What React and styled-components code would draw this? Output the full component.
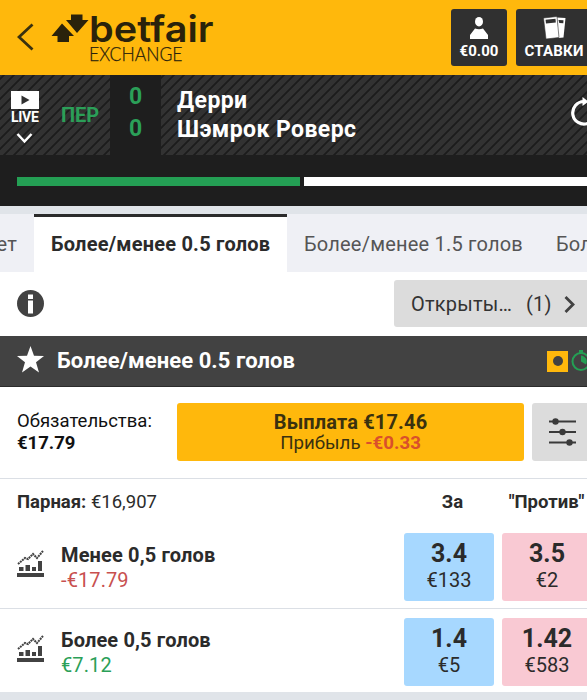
import styled, { createGlobalStyle } from "styled-components";

const GlobalStyle = createGlobalStyle`
  * {
    box-sizing: border-box;
  }
  body {
    margin: 0;
    overflow: hidden;
    background-color: #e0e4e9;
    color: #2b2b2b;
    font-family: Roboto, "Noto Sans", sans-serif;
  }
  svg {
    display: block;
    flex-shrink: 0;
  }
`;

const Page = styled.div`
  width: 100%;
  height: 700px;
  overflow: hidden;
  white-space: nowrap;
`;

const TopBar = styled.header`
  display: flex;
  height: 75px;
  padding: 9px 0 0 17px;
  background-color: #ffb80c;
`;

const BackIcon = styled.svg`
  margin: 14px 17px 0 0;
`;

const TopButtons = styled.div`
  display: flex;
  gap: 9px;
  margin-left: 230px;
`;

const TopButton = styled.button`
  display: flex;
  flex-direction: column;
  flex-shrink: 0;
  align-items: center;
  width: ${(props) => props.$width}px;
  height: 57px;
  padding: 7px 0 0;
  border: 0;
  border-radius: 3px;
  background-color: #303030;
  color: #fff;
  font: 700 15px/18px Roboto, sans-serif;
  letter-spacing: ${(props) => props.$spacing || 0}px;
  svg {
    margin-bottom: 2px;
  }
`;

const Scoreboard = styled.section`
  display: flex;
  height: 80px;
  background: repeating-linear-gradient(
    135deg,
    #323232 0,
    #323232 1.6px,
    #1c1c1c 2.3px,
    #1c1c1c 3.4px,
    #323232 4.1px,
    #323232 7.071px
  );
`;

const Live = styled.div`
  display: flex;
  flex-direction: column;
  flex-shrink: 0;
  width: 61px;
  padding: 16px 0 0 11px;
  color: #fff;
  font-size: 14px;
  line-height: 15px;
  font-weight: 700;
  letter-spacing: -0.3px;
`;

const Period = styled.div`
  flex-shrink: 0;
  width: 49px;
  padding-top: 28px;
  color: #2b9f58;
  font-size: 20px;
  line-height: 24px;
  font-weight: 700;
  letter-spacing: -0.1px;
`;

const Score = styled.div`
  flex-shrink: 0;
  width: 51px;
  padding-top: 6px;
  background-color: #1e1e1e;
  color: #2b9f58;
  font-size: 23px;
  line-height: 32px;
  font-weight: 700;
  text-align: center;
`;

const Teams = styled.div`
  flex: 1;
  padding: 11px 0 0 16px;
  color: #fff;
  font-size: 23px;
  line-height: 29px;
  font-weight: 700;
  letter-spacing: 0.42px;
`;

const RefreshIcon = styled.svg`
  margin: 22px -13px 0 0;
`;

const Timeline = styled.div`
  display: flex;
  gap: 4px;
  height: 51px;
  padding: 22px 0 20px 17px;
  background-color: #1e1e1e;
`;

const Half = styled.div`
  width: 283px;
  flex-shrink: 0;
  background-color: ${(props) => (props.$played ? "#249f54" : "#fff")};
`;

const Tabs = styled.nav`
  display: flex;
  height: 66px;
  padding-top: 8px;
  overflow: hidden;
  background-color: #e0e4e9;
`;

const Tab = styled.a`
  display: flex;
  justify-content: ${(props) => props.$align || "flex-start"};
  flex-shrink: 0;
  width: ${(props) => props.$width}px;
  height: 58px;
  padding: ${(props) => (props.$active ? 15 : 18)}px 17px 0;
  border-top: ${(props) => (props.$active ? "3px solid #2b2b2b" : "0")};
  background-color: ${(props) => (props.$active ? "#fff" : "#eff0f5")};
  color: ${(props) => (props.$active ? "#2b2b2b" : "#555")};
  font-size: 20px;
  line-height: 24px;
  font-weight: ${(props) => (props.$active ? 700 : 400)};
  letter-spacing: 0.21px;
`;

const InfoRow = styled.div`
  display: flex;
  justify-content: space-between;
  height: 64px;
  padding: 8px 0 0 17px;
  background-color: #fff;
`;

const InfoIcon = styled.svg`
  margin-top: 10px;
`;

const OpenBets = styled.button`
  display: flex;
  align-items: center;
  width: 193px;
  height: 47px;
  padding: 0 0 0 17px;
  border: 0;
  border-radius: 3px 0 0 3px;
  background-color: #dcdcdc;
  color: #333;
  font: 400 20px/24px Roboto, sans-serif;
  letter-spacing: 0.2px;
`;

const Count = styled.span`
  margin: 0 12px 0 14px;
`;

const MarketHeader = styled.div`
  display: flex;
  align-items: center;
  height: 51px;
  padding-left: 17px;
  border-bottom: 1px solid #2b2b2b;
  background-color: #424242;
`;

const MarketName = styled.h2`
  flex: 1;
  margin: 0 0 0 13px;
  color: #fff;
  font-size: 22px;
  line-height: 26px;
  font-weight: 700;
  letter-spacing: 0.08px;
`;

const CashOutBadge = styled.span`
  display: flex;
  align-items: center;
  justify-content: center;
  flex-shrink: 0;
  width: 21px;
  height: 21px;
  margin-right: 3px;
  background-color: #ffb80c;
  &::after {
    content: "";
    width: 10px;
    height: 10px;
    border-radius: 50%;
    background-color: #424242;
  }
`;

const TimerIcon = styled.svg`
  margin-right: -4px;
`;

const CashOut = styled.section`
  display: flex;
  height: 92px;
  padding: 16px 0 0 17px;
  border-bottom: 1px solid #dbdfe5;
  background-color: #fff;
`;

const Liability = styled.div`
  flex-shrink: 0;
  width: 160px;
  padding-top: 7px;
  color: #111;
  font-size: 18.5px;
  line-height: 22px;
`;

const CashOutButton = styled.button`
  flex-shrink: 0;
  width: 347px;
  height: 58px;
  margin-right: 8px;
  padding: 2px 0 0;
  border: 0;
  border-radius: 3px;
  background-color: #ffb80c;
  color: #3a310f;
  font: 400 18.7px/21px Roboto, sans-serif;
  strong {
    display: block;
    font-size: 20px;
    letter-spacing: 0.15px;
  }
`;

const Loss = styled.span`
  color: #d9502b;
  font-weight: 700;
`;

const SettingsButton = styled.button`
  flex-shrink: 0;
  width: 75px;
  height: 58px;
  padding: 0 0 0 17px;
  border: 0;
  border-radius: 3px 0 0 3px;
  background-color: #dcdcdc;
`;

const Columns = styled.div`
  display: flex;
  height: 45px;
  padding: 11px 0 0 17px;
  background-color: #fff;
  font-size: 18.5px;
  line-height: 24px;
`;

const Matched = styled.div`
  flex-shrink: 0;
  width: 387px;
`;

const ColumnTitle = styled.strong`
  flex-shrink: 0;
  width: ${(props) => props.$width}px;
  text-align: center;
`;

const RunnerRow = styled.div`
  display: flex;
  height: ${(props) => (props.$last ? 83 : 85)}px;
  padding: 9px 0 0 17px;
  border-bottom: ${(props) => (props.$last ? "0" : "1px solid #dbdfe5")};
  background-color: #fff;
`;

const ChartIcon = styled.svg`
  margin: 17px 17px 0 0;
`;

const Runner = styled.div`
  flex-shrink: 0;
  width: 343px;
  padding-top: 10px;
`;

const RunnerName = styled.div`
  font-size: 20px;
  line-height: 25px;
  font-weight: 700;
  letter-spacing: 0.14px;
`;

const Outcome = styled.div`
  color: ${(props) => (props.$negative ? "#c8504f" : "#2b9f58")};
  font-size: 20px;
  line-height: 25px;
  letter-spacing: 0.1px;
`;

const PriceButton = styled.button`
  flex-shrink: 0;
  width: 90px;
  height: 68px;
  margin-right: 8px;
  padding: 0;
  border: 0;
  border-radius: 3px;
  background-color: ${(props) => (props.$lay ? "#f9c9d3" : "#a7d8ff")};
  color: #2b2b2b;
  font: 400 20px/27px Roboto, sans-serif;
  strong {
    display: block;
    font-size: 25px;
    line-height: 27px;
  }
`;

const runners = [
  { name: "Менее 0,5 голов", outcome: "-€17.79", back: ["3.4", "€133"], lay: ["3.5", "€2"] },
  { name: "Более 0,5 голов", outcome: "€7.12", back: ["1.4", "€5"], lay: ["1.42", "€583"] },
];

function Logo() {
  return (
    <svg width="170" height="60" viewBox="0 0 170 60" fill="#2a220b">
      <path d="M20 5.500h11.500v5.500h6l-11.500 13-11-13h5z" />
      <path d="M11 14.500l12 12.500h-5v6h-11.500v-6h-6z" />
      <text x="38" y="32.500" fontFamily="Inter, sans-serif" fontSize="36" fontWeight="600" textLength="124.500" lengthAdjust="spacingAndGlyphs">
        betfair
      </text>
      <text x="38" y="51.500" fontFamily="Lato, sans-serif" fontSize="18.800" fontWeight="300" stroke="#2a220b" strokeWidth=".25" textLength="93.500" lengthAdjust="spacingAndGlyphs">
        EXCHANGE
      </text>
    </svg>
  );
}

function Chart() {
  return (
    <ChartIcon width="27" height="28" viewBox="0 0 27 28" fill="#424242">
      <path d="M1 14l7-6 3 1 5-5 4 4 6-7" fill="none" stroke="#424242" strokeWidth="2" strokeDasharray="2 .7" />
      <path d="M2 17h4.500v4h-4.500zM8.500 15h4.500v6h-4.500zM15 17h4v4h-4zM21 11h4v10h-4zM0 23h27v4h-27z" />
    </ChartIcon>
  );
}

function Price({ value, lay }) {
  return (
    <PriceButton $lay={lay}>
      <strong>{value[0]}</strong>
      {value[1]}
    </PriceButton>
  );
}

export default function App() {
  return (
    <>
      <GlobalStyle />
      <Page>
        <TopBar>
          <BackIcon width="17" height="29" viewBox="0 0 17 29" fill="none" stroke="#3a310f" strokeWidth="2.800">
            <path d="M15.500 1.500L2 14l13.500 12.500" />
          </BackIcon>
          <Logo />
          <TopButtons>
            <TopButton $width={56}>
              <svg width="18" height="24" viewBox="0 0 18 24" fill="#fff">
                <ellipse cx="9" cy="5.700" rx="4" ry="4.800" />
                <path d="M0 23v-4l5-6.500q4 1.500 8 0l5 6.500v4z" />
              </svg>
              €0.00
            </TopButton>
            <TopButton $width={76} $spacing={0.2}>
              <svg width="23" height="24" viewBox="0 0 23 24">
                <path d="M14 1.500l8.500.5-2 19.500-5 .5z" fill="#fff" />
                <path d="M15.500 4l5 .2-.2 3-4-.3z" fill="#303030" />
                <path d="M.5 2l13.500-1.500 2 21-13 1.500z" fill="#fff" stroke="#303030" strokeWidth=".6" />
                <path d="M2.500 3.800l10-1 .3 3.700-9.800 1z" fill="#303030" />
              </svg>
              СТАВКИ
            </TopButton>
          </TopButtons>
        </TopBar>

        <Scoreboard>
          <Live>
            <svg width="28" height="19" viewBox="0 0 28 19">
              <path d="M0 0h28v18h-28z" fill="#fff" />
              <path d="M10.500 4.500l8 4.500-8 4.500z" fill="#303030" />
            </svg>
            LIVE
            <svg width="27" height="20" viewBox="0 0 27 20" fill="none" stroke="#fff" strokeWidth="2.500">
              <path d="M6.500 9l7 7.500 7-7.500" />
            </svg>
          </Live>
          <Period>ПЕР</Period>
          <Score>
            <div>0</div>
            <div>0</div>
          </Score>
          <Teams>
            <div>Дерри</div>
            <div>Шэмрок Роверс</div>
          </Teams>
          <RefreshIcon width="33" height="32" viewBox="0 0 33 32">
            <path d="M17 4.500a11.300 11.300 0 1 0 10 6" fill="none" stroke="#fff" strokeWidth="3.200" />
            <path d="M15.500 0l6 4.500-6 4.500z" fill="#fff" />
          </RefreshIcon>
        </Scoreboard>
        <Timeline>
          <Half $played />
          <Half />
        </Timeline>

        <Tabs>
          <Tab $width={34} $align="flex-end">ет</Tab>
          <Tab $width={253} $active>Более/менее 0.5 голов</Tab>
          <Tab $width={252}>Более/менее 1.5 голов</Tab>
          <Tab $width={252}>Более/менее 2.5 голов</Tab>
        </Tabs>

        <InfoRow>
          <InfoIcon width="28" height="28" viewBox="0 0 28 28">
            <circle cx="13.500" cy="13.500" r="13.500" fill="#424242" />
            <path d="M11 4.500h5v4.500h-5zM11 10.500h5v13h-5z" fill="#fff" />
          </InfoIcon>
          <OpenBets>
            Открыты…
            <Count>(1)</Count>
            <svg width="11" height="19" viewBox="0 0 11 19" fill="none" stroke="#424242" strokeWidth="2.800">
              <path d="M1.500 3l7.500 7.500-7.500 7.500" />
            </svg>
          </OpenBets>
        </InfoRow>

        <MarketHeader>
          <svg width="27" height="30" viewBox="0 0 27 30" fill="#fff">
            <path d="M13.500 0l3.500 9.700 10 .3-8 6.200 3 10.300-8.500-6-8.500 6 3-10.300-8-6.200 10-.3z" />
          </svg>
          <MarketName>Более/менее 0.5 голов</MarketName>
          <CashOutBadge />
          <TimerIcon width="20" height="22" viewBox="0 0 20 22">
            <circle cx="10" cy="11.500" r="8.500" fill="none" stroke="#249f54" strokeWidth="2" />
            <path d="M8 0h4v3h-4zM10 11.500v-6a6 6 0 0 1 5 9z" fill="#249f54" />
          </TimerIcon>
        </MarketHeader>

        <CashOut>
          <Liability>
            <div>Обязательства:</div>
            <strong>€17.79</strong>
          </Liability>
          <CashOutButton>
            <strong>Выплата €17.46</strong>
            Прибыль <Loss>-€0.33</Loss>
          </CashOutButton>
          <SettingsButton>
            <svg width="27" height="28" viewBox="0 0 27 28" fill="#3a3a3a">
              <path d="M0 2.500h27v2h-27zM0 13h27v2h-27zM0 23.500h27v2h-27z" />
              <circle cx="6.500" cy="3.500" r="3.200" />
              <circle cx="13.500" cy="14" r="3.200" />
              <circle cx="20.500" cy="24.500" r="3.200" />
            </svg>
          </SettingsButton>
        </CashOut>

        <Columns>
          <Matched>
            <strong>Парная:</strong> €16,907
          </Matched>
          <ColumnTitle $width={97}>За</ColumnTitle>
          <ColumnTitle $width={91}>"Против"</ColumnTitle>
        </Columns>
        {runners.map((runner, index) => (
          <RunnerRow key={runner.name} $last={index === runners.length - 1}>
            <Chart />
            <Runner>
              <RunnerName>{runner.name}</RunnerName>
              <Outcome $negative={runner.outcome.startsWith("-")}>{runner.outcome}</Outcome>
            </Runner>
            <Price value={runner.back} />
            <Price value={runner.lay} lay />
          </RunnerRow>
        ))}
      </Page>
    </>
  );
}
